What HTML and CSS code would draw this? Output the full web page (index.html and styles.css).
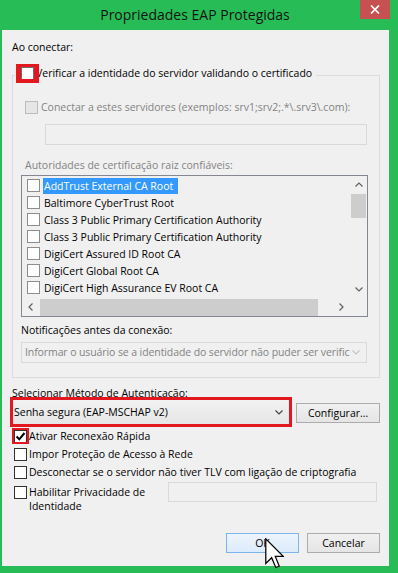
FILE: index.html
```html
<!DOCTYPE html>
<html lang="pt">
<head>
<meta charset="utf-8">
<title>Propriedades EAP Protegidas</title>
<link rel="stylesheet" href="styles.css">
</head>
<body>
<div class="window">
  <div class="titlebar">
    <div class="title">Propriedades EAP Protegidas</div>
    <div class="close"><svg width="10" height="9" viewBox="0 0 10 9"><path d="M1 0.5 L9 8.5 M9 0.5 L1 8.5" stroke="#fff" stroke-width="1.7"/></svg></div>
  </div>
  <div class="client">
    <div class="top-label">Ao conectar:</div>
    <div class="group">
      <div class="legend">
        <span class="cb-wrap"><span class="cb"></span><span class="redbox big"></span></span>
        <span class="legend-text">Verificar a identidade do servidor validando o certificado</span>
      </div>
      <div class="row servers">
        <span class="cb dis"></span>
        <span class="dis-text">Conectar a estes servidores (exemplos: srv1;srv2;.*\.srv3\.com):</span>
      </div>
      <div class="input dis-input servers-input"></div>
      <div class="dis-text ca-label">Autoridades de certificação raiz confiáveis:</div>
      <div class="list">
        <div class="items">
          <div class="item"><span class="cb"></span><span class="item-text sel">AddTrust External CA Root</span></div>
          <div class="item"><span class="cb"></span><span class="item-text">Baltimore CyberTrust Root</span></div>
          <div class="item"><span class="cb"></span><span class="item-text">Class 3 Public Primary Certification Authority</span></div>
          <div class="item"><span class="cb"></span><span class="item-text">Class 3 Public Primary Certification Authority</span></div>
          <div class="item"><span class="cb"></span><span class="item-text">DigiCert Assured ID Root CA</span></div>
          <div class="item"><span class="cb"></span><span class="item-text">DigiCert Global Root CA</span></div>
          <div class="item"><span class="cb"></span><span class="item-text">DigiCert High Assurance EV Root CA</span></div>
        </div>
        <div class="vscroll">
          <div class="arrow"><svg width="8" height="5" viewBox="0 0 8 5"><path d="M0.5 4.5 L4 1 L7.5 4.5" fill="none" stroke="#606060" stroke-width="1.2"/></svg></div>
          <div class="vthumb"></div>
          <div class="spacer"></div>
          <div class="arrow"><svg width="8" height="5" viewBox="0 0 8 5"><path d="M0.5 0.5 L4 4 L7.5 0.5" fill="none" stroke="#606060" stroke-width="1.2"/></svg></div>
        </div>
        <div class="hscroll">
          <div class="arrow"><svg width="5" height="8" viewBox="0 0 5 8"><path d="M4.5 0.5 L1 4 L4.5 7.5" fill="none" stroke="#606060" stroke-width="1.2"/></svg></div>
          <div class="hthumb"></div>
          <div class="spacer"></div>
          <div class="arrow"><svg width="5" height="8" viewBox="0 0 5 8"><path d="M0.5 0.5 L4 4 L0.5 7.5" fill="none" stroke="#606060" stroke-width="1.2"/></svg></div>
        </div>
        <div class="corner"></div>
      </div>
      <div class="notif-label">Notificações antes da conexão:</div>
      <div class="combo dis-combo">
        <span class="combo-text">Informar o usuário se a identidade do servidor não puder ser verific</span>
        <svg class="chev" width="8" height="5" viewBox="0 0 8 5"><path d="M0.5 0.5 L4 4 L7.5 0.5" fill="none" stroke="#c4c4c4" stroke-width="1.2"/></svg>
      </div>
    </div>
    <div class="auth-label">Selecionar Método de Autenticação:</div>
    <div class="auth-row">
      <div class="combo auth-combo">
        <span class="combo-text">Senha segura (EAP-MSCHAP v2)</span>
        <svg class="chev" width="8" height="5" viewBox="0 0 8 5"><path d="M0.5 0.5 L4 4 L7.5 0.5" fill="none" stroke="#444" stroke-width="1.2"/></svg>
        <span class="redbox combo-red"></span>
      </div>
      <div class="button config">Configurar...</div>
    </div>
    <div class="checks">
      <div class="row check">
        <span class="cb-wrap"><span class="cb"><svg width="11" height="11" viewBox="0 0 11 11"><path d="M1.5 5.5 L4.3 8.3 L9.5 2" fill="none" stroke="#000" stroke-width="2"/></svg></span><span class="redbox small"></span></span>
        <span>Ativar Reconexão Rápida</span>
      </div>
      <div class="row check"><span class="cb"></span><span>Impor Proteção de Acesso à Rede</span></div>
      <div class="row check"><span class="cb"></span><span>Desconectar se o servidor não tiver TLV com ligação de criptografia</span></div>
      <div class="row check privacy">
        <span class="cb"></span>
        <span class="privacy-text">Habilitar Privacidade de Identidade</span>
        <div class="input dis-input privacy-input"></div>
      </div>
    </div>
    <div class="footer">
      <div class="button ok">OK</div>
      <div class="button">Cancelar</div>
    </div>
    <svg class="cursor" width="19" height="31" viewBox="0 0 12 19.5"><path d="M0.5 0.5 L0.5 16 L4.2 12.4 L6.8 18.6 L9 17.7 L6.5 11.6 L11.5 11.6 Z" fill="#fff" stroke="#000" stroke-width="0.8" stroke-linejoin="miter"/></svg>
  </div>
</div>
</body>
</html>
```

FILE: styles.css
```css
* { box-sizing: border-box; margin: 0; padding: 0; }
html, body { width: 398px; height: 573px; overflow: hidden; }
body {
  background: #27bc56;
  font-family: "Open Sans", "Noto Sans", sans-serif;
  font-size: 10.5px;
  line-height: 15px;
  color: #000;
}
.window { width: 398px; height: 573px; background: #27bc56; display: flex; flex-direction: column; }
.titlebar {
  height: 30px;
  display: grid;
  grid-template-columns: 1fr auto 1fr;
  align-items: center;
  padding-right: 8px;
}
.title { grid-column: 2; font-size: 14px; line-height: 20px; color: #141414; }
.close {
  grid-column: 3;
  justify-self: end;
  align-self: start;
  width: 30px;
  height: 19px;
  background: #c75050;
  display: flex;
  align-items: center;
  justify-content: center;
}
.client {
  margin-left: 2px;
  width: 387px;
  height: 536px;
  background: #f0f0f0;
  display: flex;
  flex-direction: column;
  padding: 0 9px 13px 10px;
  position: relative;
}
.top-label { margin-top: 10px; }

.group {
  margin-top: 20px;
  width: 368px;
  border: 1px solid #dcdcdc;
  padding: 0 12px 14px 8px;
  display: flex;
  flex-direction: column;
}
.legend {
  margin-top: -10px;
  margin-left: -6px;
  padding: 0 4px 0 6px;
  height: 15px;
  background: #f0f0f0;
  align-self: flex-start;
  display: flex;
  align-items: center;
  gap: 2px;
}
.legend-text { position: relative; z-index: 0; }
.cb-wrap { position: relative; display: flex; flex: none; }
.cb {
  width: 13px;
  height: 13px;
  border: 1px solid #707070;
  background: #fff;
  flex: none;
  display: flex;
  align-items: center;
  justify-content: center;
}
.cb.dis { border-color: #bcbcbc; background: #e6e6e6; }
.redbox { position: absolute; border: 3px solid #e2171f; z-index: 2; }
.redbox.big { left: -5px; top: -3px; width: 23px; height: 19px; border-width: 3px 5px 4px 5px; }
.redbox.small { left: -2px; top: -2px; width: 17px; height: 16px; border-width: 2px; }

.row { display: flex; align-items: center; height: 15px; }
.servers { margin-top: 19px; padding-left: 4px; gap: 3px; }
.dis-text { color: #838383; }
.input { height: 21px; border: 1px solid #d9d9d9; background: #f0f0f0; }
.servers-input { margin-top: 9px; margin-left: 24px; width: 322px; }
.ca-label { margin-top: 13px; padding-left: 4px; }

.list {
  margin-top: 2px;
  width: 347px;
  height: 142px;
  border: 1px solid #828790;
  background: #f0f0f0;
  display: grid;
  grid-template-columns: 1fr 17px;
  grid-template-rows: 1fr 18px;
  overflow: hidden;
}
.items { padding-top: 1px; overflow: hidden; }
.item { height: 17px; display: flex; align-items: center; padding-left: 5px; gap: 3px; white-space: nowrap; }
.item .cb { border-color: #8d8d8d; }
.item-text { padding: 0 1px; line-height: 16px; }
.item-text.sel { background: #3399ff; color: #fff; padding-right: 5px; }
.vscroll { display: flex; flex-direction: column; }
.hscroll { display: flex; }
.arrow { width: 17px; height: 17px; flex: none; display: flex; align-items: center; justify-content: center; }
.vthumb { margin: 1px 1px 0 1px; height: 24px; background: #cdcdcd; flex: none; }
.hthumb { margin: 1px 0 0 1px; width: 278px; height: 17px; background: #cdcdcd; flex: none; }
.spacer { flex: 1; }
.corner { background: #f0f0f0; }

.notif-label { margin-top: 6px; }
.combo {
  height: 21px;
  display: flex;
  align-items: center;
  position: relative;
}
.combo-text { flex: 1; min-width: 0; white-space: nowrap; }
.chev { flex: none; margin: 0 6px 0 5px; }
.dis-combo {
  margin-top: 4px;
  border: 1px solid #d9d9d9;
  background: #f0f0f0;
  color: #838383;
  padding-left: 3px;
}
.dis-combo .combo-text { letter-spacing: -0.1px; }

.auth-label { margin-top: 9px; line-height: 13px; }
.auth-row { display: flex; align-items: flex-start; gap: 7px; }
.auth-combo {
  width: 277px;
  height: 24px;
  background: linear-gradient(#f2f2f2, #e6e6e6);
  padding-left: 1px;
  margin-left: 1px;
}
.auth-combo .chev { margin-right: 6px; }
.combo-red { left: -3px; top: -3px; right: -3px; bottom: -3px; }
.button {
  width: 73px;
  height: 20px;
  border: 1px solid #acacac;
  background: linear-gradient(#f0f0f0, #e5e5e5);
  display: flex;
  align-items: center;
  justify-content: center;
}
.config { width: 84px; margin-top: 3px; }

.checks { margin-top: 5px; display: flex; flex-direction: column; gap: 3px; }
.check { padding-left: 2px; gap: 2px; }
.check .cb { border-color: #333; }
.privacy { margin-top: 2px; align-items: flex-start; height: auto; }
.privacy .cb { margin-top: 1px; }
.privacy-text { width: 137px; line-height: 14px; }
.privacy-input { width: 209px; height: 20px; margin-top: -3px; }

.footer { margin-top: auto; display: flex; justify-content: flex-end; gap: 8px; }
.button.ok { border-color: #7eb4ea; background: linear-gradient(#ecf4fc, #dcecfc); }
.cursor { position: absolute; left: 263px; top: 508px; z-index: 5; }
```
